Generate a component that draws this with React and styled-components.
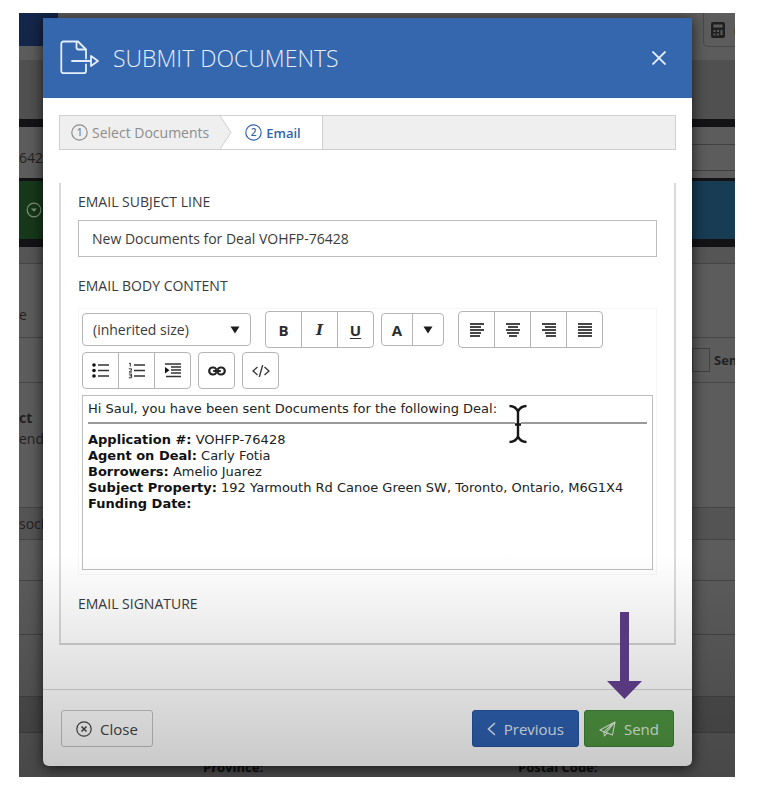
import React from "react";
import styled, { createGlobalStyle, css } from "styled-components";

const GlobalStyle = createGlobalStyle`
  * { box-sizing: border-box; }
  body {
    margin: 0;
    background: #fff;
    color: #3a3a3a;
    font-family: "Open Sans", "Noto Sans", sans-serif;
    font-size: 14px;
  }
  button, input, select { font: inherit; color: inherit; }
`;

const Stage = styled.main`
  display: grid;
  grid-template-columns: minmax(0, 1fr);
  margin: 13px 33px 9px 19px;
  overflow: hidden;
  isolation: isolate;
  position: relative;
  &::after {
    content: "";
    position: absolute;
    inset: 540px 0 0;
    z-index: 1;
    pointer-events: none;
    background: linear-gradient(rgba(0, 0, 0, 0), rgba(0, 0, 0, 0.22));
  }
`;

/* Dimmed application behind the dialog */
const Backdrop = styled.div`
  grid-area: 1 / 1;
  display: flex;
  flex-direction: column;
  background: #5c5c5c;
  color: #222;
  overflow: hidden;
`;

const Band = styled.div`
  display: flex;
  justify-content: space-between;
  flex: none;
  height: ${(p) => p.$h}px;
  background: ${(p) => p.$bg || "transparent"};
  border-bottom: ${(p) => (p.$line ? "1px solid #454545" : "0")};
`;

const Side = styled.div`
  display: flex;
  flex-direction: column;
  justify-content: ${(p) => p.$justify || "center"};
  width: ${(p) => p.$w}px;
  height: 100%;
  padding: ${(p) => p.$top || 0}px 0 ${(p) => p.$bottom || 0}px;
  line-height: 21px;
  background: ${(p) => p.$bg || "transparent"};
`;

const CalcButton = styled.div`
  display: flex;
  align-items: center;
  gap: 9px;
  width: 32px;
  height: 34px;
  padding-left: 7px;
  border: 1px solid #484848;
  border-width: 0 0 1px 1px;
  border-radius: 0 0 0 5px;
  overflow: hidden;
  & > svg { flex: none; }
`;

const OptionRow = styled.div`
  display: flex;
  align-items: center;
  gap: 4px;
  font-size: 13px;
  font-weight: 700;
`;

const OptionBox = styled.span`
  flex: none;
  width: 18px;
  height: 24px;
  border: 1px solid #404040;
`;

const BackField = styled.div`
  height: 27px;
  border: 1px solid #404040;
  border-width: 1px 0;
`;

const BackLabels = styled.div`
  display: flex;
  align-items: flex-end;
  flex: 1;
  font-size: 13px;
  font-weight: 700;
  line-height: 20px;
  color: #111;
  & > span { flex: none; width: 44%; }
  &::before { content: ""; flex: none; width: 184px; }
`;

const BackIconSlot = styled.span`
  display: flex;
  justify-content: flex-end;
  padding-right: 1px;
`;

const Dialog = styled.section`
  grid-area: 1 / 1;
  position: relative;
  margin: 5px 43px 11px 24px;
  display: flex;
  flex-direction: column;
  background: #fff;
  border-radius: 0 0 6px 6px;
  box-shadow: 0 2px 14px rgba(0, 0, 0, 0.7);
`;

const Header = styled.header`
  display: flex;
  align-items: center;
  gap: 12px;
  height: 80px;
  padding: 0 24px 0 17px;
  background: #3567af;
  color: #e4eefb;
`;

const Title = styled.h1`
  flex: 1;
  margin: 0;
  font-size: 23px;
  font-weight: 300;
  line-height: 32px;
`;

const IconButton = styled.button`
  display: flex;
  padding: 2px;
  border: 0;
  background: none;
  cursor: pointer;
`;

const Content = styled.div`
  padding: 17px 16px 44px;
`;

const Steps = styled.nav`
  display: flex;
  height: 35px;
  border: 1px solid #cfcfcf;
  background: #efefef;
`;

const Step = styled.a`
  display: flex;
  align-items: center;
  gap: 4px;
  padding: 0 11px;
  color: #8d8d8d;
  text-decoration: none;
  ${(p) =>
    p.$active &&
    css`
      padding: 0 21px 0 13px;
      background: #fff;
      border-right: 1px solid #cfcfcf;
      color: #3563ad;
      font-size: 13px;
      font-weight: 600;
    `}
`;

const StepEdge = styled.svg`
  flex: none;
  width: 12px;
  height: 33px;
  background: #fff;
`;

const Panel = styled.form`
  display: flex;
  flex-direction: column;
  margin-top: 33px;
  padding: 8px 17px 28px;
  border: solid #dadada;
  border-width: 0 2px 2px;
  border-bottom-color: #d0d0d0;
`;

const Label = styled.label`
  line-height: 22px;
  font-size: 14px;
`;

const SubjectInput = styled.input`
  width: 100%;
  height: 37px;
  margin: 7px 0 18px;
  padding: 0 13px;
  border: 1px solid #bdbdbd;
  border-radius: 0;
  background: #fff;
  outline: 0;
`;

const Editor = styled.div`
  display: flex;
  flex-direction: column;
  gap: 4px;
  margin: 11px 0 18px;
  padding: 2px 3px 4px;
  border: 1px solid #f6f6f6;
`;

const ToolRow = styled.div`
  display: flex;
  flex-wrap: wrap;
  align-items: center;
  gap: ${(p) => p.$gap}px;
`;

const SizePicker = styled.div`
  display: flex;
  align-items: center;
  position: relative;
  width: 169px;
  & > svg {
    position: absolute;
    right: 11px;
    pointer-events: none;
  }
`;

const SizeSelect = styled.select`
  appearance: none;
  width: 100%;
  height: 33px;
  padding: 0 10px;
  border: 1px solid #b5b5b5;
  border-radius: 4px;
  background: #fff;
`;

const ToolGroup = styled.div`
  display: flex;
  border: 1px solid #b5b5b5;
  border-radius: 4px;
`;

const Tool = styled.button`
  box-sizing: content-box;
  display: flex;
  align-items: center;
  justify-content: center;
  width: ${(p) => (p.$narrow ? 30 : 35)}px;
  height: ${(p) => (p.$narrow ? 31 : 35)}px;
  padding: 0;
  border: 0;
  background: none;
  color: #2d2d2d;
  cursor: pointer;
  & + & { border-left: 1px solid #b5b5b5; }
`;

const Glyph = styled.span`
  font-size: 15px;
  font-weight: 700;
  line-height: 18px;
  font-family: ${(p) => (p.$serif ? '"DejaVu Serif", serif' : "inherit")};
  font-style: ${(p) => (p.$serif ? "italic" : "normal")};
  text-decoration: ${(p) => (p.$under ? "underline" : "none")};
  text-underline-offset: 2px;
`;

const Message = styled.div`
  position: relative;
  min-height: 175px;
  margin-top: 2px;
  padding: 5px;
  border: 1px solid #bdbdbd;
  background: #fff;
  color: #222;
  font-family: "DejaVu Sans", Verdana, sans-serif;
  font-size: 13px;
  line-height: 16px;
  outline: 0;
  & p { margin: 0; }
  & strong { color: #111; }
  & hr {
    margin: 5px 0 8px;
    border: 0;
    border-top: 2px solid #999;
  }
`;

const TextCursor = styled.svg`
  position: absolute;
  left: 423px;
  top: 6px;
`;

const Footer = styled.footer`
  display: flex;
  align-items: center;
  gap: 5px;
  padding: 20px 18px 19px;
  border-top: 1px solid #d4d4d4;
`;

const tones = {
  plain: css`
    margin-right: auto;
    border-color: #c4c4c4;
    background: transparent;
    color: #444;
  `,
  blue: css`
    border-color: #26549f;
    background: #2e61b2;
    color: #e3ecf7;
  `,
  green: css`
    border-color: #3f8238;
    background: #509742;
    color: #e2f2df;
  `,
};

const Button = styled.button`
  display: flex;
  align-items: center;
  gap: 8px;
  height: 37px;
  padding: 0 14px;
  border: 1px solid;
  border-radius: 3px;
  font-size: 15px;
  cursor: pointer;
  ${(p) => tones[p.$tone]}
`;

const SendSlot = styled.div`
  position: relative;
`;

const Pointer = styled.svg`
  position: absolute;
  z-index: 2;
  right: 32px;
  bottom: calc(100% + 11px);
  pointer-events: none;
`;

const DocumentIcon = () => (
  <svg width="41" height="37" viewBox="0 0 41 37" fill="none" stroke="currentColor" strokeWidth="1.8" strokeLinejoin="round" strokeLinecap="round" aria-hidden="true">
    <path d="M26 18.500V9.500L18 1.500H3.500A2.200 2.200 0 0 0 1.300 3.700V31A2.200 2.200 0 0 0 3.500 33.200H23.800A2.200 2.200 0 0 0 26 31V24.500" />
    <path d="M16.500 1.800V7.500A2 2 0 0 0 18.500 9.500H25.500M12 21H31M31 16L38 21L31 26Z" />
  </svg>
);

const CloseIcon = () => (
  <svg width="14" height="14" viewBox="0 0 14 14" stroke="#e9f1fb" strokeWidth="1.8" aria-hidden="true">
    <path d="M.5.5l13 13M13.500.5l-13 13" />
  </svg>
);

const StepNumber = ({ n }) => (
  <svg width="17" height="17" viewBox="0 0 17 17" aria-hidden="true">
    <circle cx="8.5" cy="8.5" r="7.7" fill="none" stroke="currentColor" strokeWidth="1.2" />
    <text x="8.5" y="12.200" textAnchor="middle" fontSize="10" fontWeight="600" fill="currentColor">{n}</text>
  </svg>
);

const Caret = () => (
  <svg width="10" height="8" viewBox="0 0 10 8" fill="#1c1c1c" aria-hidden="true">
    <path d="M.5.5h9L5 7.500z" />
  </svg>
);

const alignLines = {
  left: [[0, 14], [0, 11], [0, 14], [0, 11], [0, 10]],
  center: [[0, 14], [2, 12], [0, 14], [1, 13], [3, 11]],
  right: [[0, 14], [3, 14], [0, 14], [3, 14], [4, 14]],
  justify: [[0, 14], [0, 14], [0, 14], [0, 14], [0, 14]],
};

const AlignIcon = ({ kind }) => (
  <svg width="14" height="14" viewBox="0 0 14 14" stroke="#3d3d3d" strokeWidth="1.900" aria-hidden="true">
    {alignLines[kind].map(([a, b], i) => (
      <path key={i} d={`M${a} ${1 + i * 3}H${b}`} />
    ))}
  </svg>
);

const BulletIcon = () => (
  <svg width="17" height="15" viewBox="0 0 17 15" stroke="#333" strokeWidth="1.300" aria-hidden="true">
    <path d="M6 2H17M6 7.500H17M6 13H17" />
    <g fill="#111" stroke="none">
      <circle cx="2" cy="2" r="1.800" /><circle cx="2" cy="7.500" r="1.800" /><circle cx="2" cy="13" r="1.800" />
    </g>
  </svg>
);

const NumberIcon = () => (
  <svg width="17" height="17" viewBox="0 0 17 17" stroke="#333" strokeWidth="1.300" fill="none" aria-hidden="true">
    <path d="M6 3H17M6 8.500H17M6 14H17" />
    <path d="M1 1.500L2.300 1V4.500M.8 6.800H3.500V8.300L1 10H4M.8 12H3.600V15.800H.8M1.500 13.800H3.600" strokeWidth="1" />
  </svg>
);

const IndentIcon = () => (
  <svg width="16" height="15" viewBox="0 0 16 15" stroke="#333" strokeWidth="1.700" aria-hidden="true">
    <path d="M0 1H16M6 4H16M6 7H16M6 10H16M1 13.500H16" />
    <path d="M0 4V10.500L4.500 7.200Z" fill="#111" stroke="none" />
  </svg>
);

const LinkIcon = () => (
  <svg width="18" height="10" viewBox="0 0 18 10" stroke="#222" strokeWidth="2.200" fill="none" strokeLinecap="round" aria-hidden="true">
    <path d="M8 3A3.200 3.200 0 0 0 5.500 1.500H4.700A3.400 3.400 0 0 0 4.700 8.500H5.500A3.200 3.200 0 0 0 8 7M10 3A3.200 3.200 0 0 1 12.500 1.500H13.300A3.400 3.400 0 0 1 13.300 8.500H12.500A3.200 3.200 0 0 1 10 7M6 5H12" />
  </svg>
);

const CodeIcon = () => (
  <svg width="18" height="12" viewBox="0 0 18 12" stroke="#3a3a3a" strokeWidth="1.400" fill="none" aria-hidden="true">
    <path d="M5.500 2L1 6L5.500 10M12.500 2L17 6L12.500 10M10.700 0L7.300 12" />
  </svg>
);

const CalculatorIcon = () => (
  <svg width="14" height="16" viewBox="0 0 14 16" aria-hidden="true">
    <rect width="14" height="16" rx="2" fill="#202020" />
    <path d="M2.500 2.500h9v3h-9zM2.500 8h2v2h-2zM6 8h2v2H6zM9.500 8h2v5h-2zM2.500 11.500h2v2h-2zM6 11.500h2v2H6z" fill="#5c5c5c" />
  </svg>
);

const CircleDownIcon = () => (
  <svg width="16" height="16" viewBox="0 0 16 16" fill="none" stroke="#7b927b" strokeWidth="1.200" aria-hidden="true">
    <circle cx="8" cy="8" r="6.800" />
    <path d="M5 6.500h6L8 9.800z" fill="#7b927b" stroke="none" />
  </svg>
);

const CircleCloseIcon = () => (
  <svg width="16" height="16" viewBox="0 0 16 16" fill="none" stroke="currentColor" strokeWidth="1.200" aria-hidden="true">
    <circle cx="8" cy="8" r="7.200" />
    <path d="M5.500 5.500l5 5M10.500 5.500l-5 5" strokeWidth="1.500" />
  </svg>
);

const BackIcon = () => (
  <svg width="9" height="14" viewBox="0 0 9 14" fill="none" stroke="currentColor" strokeWidth="1.600" aria-hidden="true">
    <path d="M8 1L1.500 7L8 13" />
  </svg>
);

const PlaneIcon = () => (
  <svg width="17" height="16" viewBox="0 0 17 16" fill="none" stroke="currentColor" strokeWidth="1.100" strokeLinejoin="round" aria-hidden="true">
    <path d="M16 1L1 9L4.800 10.800L13.500 14L16 1L4.800 10.800L5.500 15L8 12" />
    <path d="M16 1L7 11.600" />
  </svg>
);

const details = [
  ["Application #:", "VOHFP-76428"],
  ["Agent on Deal:", "Carly Fotia"],
  ["Borrowers:", "Amelio Juarez"],
  ["Subject Property:", "192 Yarmouth Rd Canoe Green SW, Toronto, Ontario, M6G1X4"],
  ["Funding Date:", ""],
];

function DimmedPage() {
  return (
    <Backdrop aria-hidden="true">
      <Band $h={33}>
        <Side $w={39} $bg="#14264a" />
        <CalcButton><CalculatorIcon />(</CalcButton>
      </Band>
      <Band $h={14} />
      <Band $h={59} $bg="#505050" />
      <Band $h={8} $bg="#131315" />
      <Band $h={51}>
        <Side $w={24} $top={10}>642</Side>
        <Side $w={43} $top={10}><BackField /></Side>
      </Band>
      <Band $h={3} $bg="#131315" />
      <Band $h={58}>
        <Side $w={24} $bg="#17381b"><BackIconSlot><CircleDownIcon /></BackIconSlot></Side>
        <Side $w={43} $bg="#183c54" />
      </Band>
      <Band $h={8} $bg="#131315" />
      <Band $h={17} $bg="#555" $line />
      <Band $h={74} $line>
        <Side $w={24} $justify="flex-end" $bottom={12}>e</Side>
      </Band>
      <Band $h={45} $line>
        <span />
        <Side $w={43}>
          <OptionRow><OptionBox />Sen</OptionRow>
        </Side>
      </Band>
      <Band $h={125} $line>
        <Side $w={24} $bottom={34}><b>ct</b><span>end</span></Side>
      </Band>
      <Band $h={32} $bg="#545454" $line><Side $w={24}>soci</Side></Band>
      <Band $h={41} $line />
      <Band $h={54} $line />
      <Band $h={62} $line />
      <Band $h={36} $bg="#505050" $line />
      <BackLabels><span>Province:</span><span>Postal Code:</span></BackLabels>
    </Backdrop>
  );
}

export default function App() {
  return (
    <>
      <GlobalStyle />
      <Stage>
        <DimmedPage />
        <Dialog role="dialog" aria-labelledby="dialog-title">
          <Header>
            <DocumentIcon />
            <Title id="dialog-title">SUBMIT DOCUMENTS</Title>
            <IconButton type="button" aria-label="Close dialog"><CloseIcon /></IconButton>
          </Header>
          <Content>
            <Steps aria-label="Steps">
              <Step href="#documents"><StepNumber n="1" />Select Documents</Step>
              <StepEdge viewBox="0 0 12 33" aria-hidden="true">
                <path d="M0 0L11 16.500L0 33Z" fill="#efefef" />
                <path d="M0 0L11 16.500L0 33" fill="none" stroke="#cfcfcf" />
              </StepEdge>
              <Step href="#email" $active aria-current="step"><StepNumber n="2" />Email</Step>
            </Steps>
            <Panel id="email-form" onSubmit={(e) => e.preventDefault()}>
              <Label htmlFor="subject">EMAIL SUBJECT LINE</Label>
              <SubjectInput id="subject" type="text" defaultValue="New Documents for Deal VOHFP-76428" />
              <Label as="span" id="body-label">EMAIL BODY CONTENT</Label>
              <Editor>
                <ToolRow $gap={14}>
                  <SizePicker>
                    <SizeSelect aria-label="Font size"><option>(inherited size)</option></SizeSelect>
                    <Caret />
                  </SizePicker>
                  <ToolRow $gap={7}>
                    <ToolGroup>
                      <Tool type="button" aria-label="Bold"><Glyph>B</Glyph></Tool>
                      <Tool type="button" aria-label="Italic"><Glyph $serif>I</Glyph></Tool>
                      <Tool type="button" aria-label="Underline"><Glyph $under>U</Glyph></Tool>
                    </ToolGroup>
                    <ToolGroup>
                      <Tool type="button" $narrow aria-label="Text colour"><Glyph>A</Glyph></Tool>
                      <Tool type="button" $narrow aria-label="Choose colour"><Caret /></Tool>
                    </ToolGroup>
                  </ToolRow>
                  <ToolGroup>
                    {Object.keys(alignLines).map((kind) => (
                      <Tool key={kind} type="button" aria-label={`Align ${kind}`}><AlignIcon kind={kind} /></Tool>
                    ))}
                  </ToolGroup>
                </ToolRow>
                <ToolRow $gap={7}>
                  <ToolGroup>
                    <Tool type="button" aria-label="Bulleted list"><BulletIcon /></Tool>
                    <Tool type="button" aria-label="Numbered list"><NumberIcon /></Tool>
                    <Tool type="button" aria-label="Indent"><IndentIcon /></Tool>
                  </ToolGroup>
                  <ToolGroup><Tool type="button" aria-label="Insert link"><LinkIcon /></Tool></ToolGroup>
                  <ToolGroup><Tool type="button" aria-label="View source"><CodeIcon /></Tool></ToolGroup>
                </ToolRow>
                <Message role="textbox" aria-multiline="true" aria-labelledby="body-label" contentEditable suppressContentEditableWarning spellCheck={false}>
                  <p>Hi Saul, you have been sent Documents for the following Deal:</p>
                  <hr />
                  {details.map(([name, value]) => (
                    <p key={name}><strong>{name}</strong> {value}</p>
                  ))}
                  <TextCursor width="24" height="44" viewBox="0 0 24 44" fill="none" aria-hidden="true">
                    <path d="M3.500 4Q9.500 4 12 9.500Q14.500 4 20.500 4M12 9V35M3.500 40Q9.500 40 12 34.500Q14.500 40 20.500 40M9 22.500H15" stroke="#fff" strokeWidth="6" />
                    <path d="M3.500 4Q9.500 4 12 9.500Q14.500 4 20.500 4M12 9V35M3.500 40Q9.500 40 12 34.500Q14.500 40 20.500 40M9 22.500H15" stroke="#161616" strokeWidth="2.400" />
                  </TextCursor>
                </Message>
              </Editor>
              <Label as="span">EMAIL SIGNATURE</Label>
            </Panel>
          </Content>
          <Footer>
            <Button type="button" $tone="plain"><CircleCloseIcon />Close</Button>
            <Button type="button" $tone="blue"><BackIcon />Previous</Button>
            <SendSlot>
              <Button type="submit" form="email-form" $tone="green"><PlaneIcon />Send</Button>
              <Pointer width="35" height="87" viewBox="0 0 35 87" aria-hidden="true">
                <path d="M13 0h9v69h13L17.500 87L0 69h13z" fill="#58397f" />
              </Pointer>
            </SendSlot>
          </Footer>
        </Dialog>
      </Stage>
    </>
  );
}
